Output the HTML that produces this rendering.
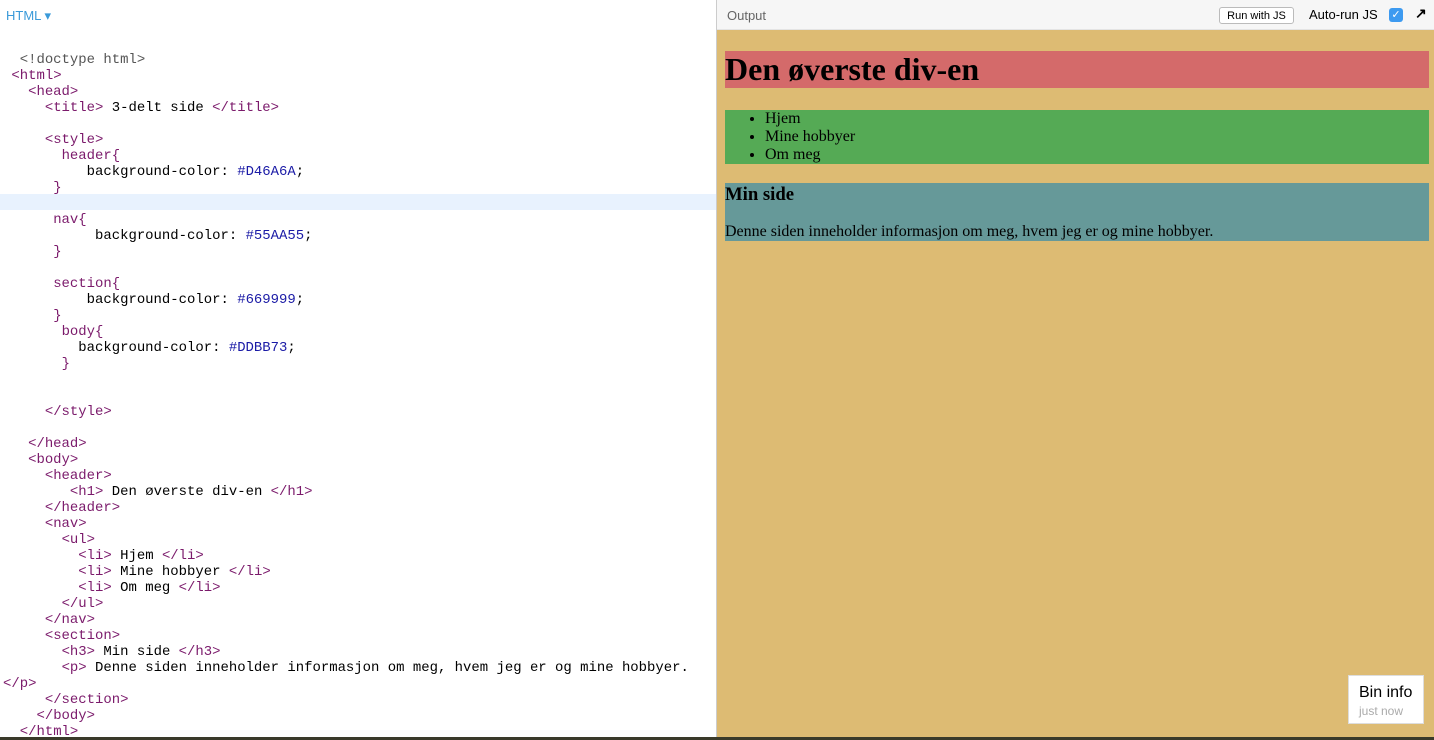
<!DOCTYPE html>
<html><head><meta charset="utf-8"><style>
html,body{margin:0;padding:0;width:1434px;height:740px;overflow:hidden;background:#fff;font-family:"Liberation Sans",sans-serif}
#left{position:absolute;left:0;top:0;width:716px;height:740px;background:#fff}
#lbl{position:absolute;left:6px;top:8px;color:#3a9ad9;font-size:13px}
.hl{position:absolute;left:0;top:194px;width:716px;height:16px;background:#e8f2fe}
.code{position:absolute;left:3px;top:52px;font-family:"Liberation Mono",monospace;font-size:13.95px;line-height:16px;white-space:pre;color:#000}
.t{color:#7b1a6b}.v{color:#1a1aa6}.g{color:#555}
#div{position:absolute;left:716px;top:0;width:1px;height:740px;background:#ccc}
#right{position:absolute;left:717px;top:0;width:717px;height:740px}
#rh{position:absolute;left:0;top:0;width:717px;height:30px;background:#f6f6f6;border-bottom:1px solid #e4e4e4;box-sizing:border-box}
#out{position:absolute;left:10px;top:8px;color:#666;font-size:13px}
#run{position:absolute;left:502px;top:7px;width:75px;height:17px;border:1px solid #bbb;border-radius:3px;background:#fff;font-size:11px;line-height:17px;text-align:center;box-sizing:border-box;color:#000}
#auto{position:absolute;left:592px;top:7px;font-size:13px;color:#000}
#cb{position:absolute;left:672px;top:8px;width:14px;height:14px;background:#3d9af0;border-radius:3px;color:#fff;font-size:11px;line-height:14px;text-align:center}
#arr{position:absolute;left:698px;top:5px;font-size:14px;font-weight:bold}
#y{position:absolute;left:0;top:30px;width:717px;height:707px;background:#DDBB73;font-family:"Liberation Serif",serif}
#bot{position:absolute;left:0;top:737px;width:1434px;height:3px;background:#3a3a2a}
.box{position:absolute;left:8px;width:704px}
h1{margin:0;font-size:32px;line-height:37px;font-weight:bold}
ul{margin:0;padding-left:40px;font-size:16px;line-height:18px}
#bin{position:absolute;left:631px;top:645px;width:76px;height:49px;background:#fff;border:1px solid #ddd;box-sizing:border-box;font-family:"Liberation Sans",sans-serif}
</style></head><body>
<div id="left">
<div id="lbl">HTML ▾</div>
<div class="hl"></div>
<div class="code"><span class="g">  &lt;!doctype html&gt;</span>
 <span class="t">&lt;html&gt;</span>
   <span class="t">&lt;head&gt;</span>
     <span class="t">&lt;title&gt;</span> 3-delt side <span class="t">&lt;/title&gt;</span>

     <span class="t">&lt;style&gt;</span>
       <span class="t">header{</span>
          background-color: <span class="v">#D46A6A</span>;
      <span class="t">}</span>

      <span class="t">nav{</span>
           background-color: <span class="v">#55AA55</span>;
      <span class="t">}</span>

      <span class="t">section{</span>
          background-color: <span class="v">#669999</span>;
      <span class="t">}</span>
       <span class="t">body{</span>
         background-color: <span class="v">#DDBB73</span>;
       <span class="t">}</span>


     <span class="t">&lt;/style&gt;</span>

   <span class="t">&lt;/head&gt;</span>
   <span class="t">&lt;body&gt;</span>
     <span class="t">&lt;header&gt;</span>
        <span class="t">&lt;h1&gt;</span> Den øverste div-en <span class="t">&lt;/h1&gt;</span>
     <span class="t">&lt;/header&gt;</span>
     <span class="t">&lt;nav&gt;</span>
       <span class="t">&lt;ul&gt;</span>
         <span class="t">&lt;li&gt;</span> Hjem <span class="t">&lt;/li&gt;</span>
         <span class="t">&lt;li&gt;</span> Mine hobbyer <span class="t">&lt;/li&gt;</span>
         <span class="t">&lt;li&gt;</span> Om meg <span class="t">&lt;/li&gt;</span>
       <span class="t">&lt;/ul&gt;</span>
     <span class="t">&lt;/nav&gt;</span>
     <span class="t">&lt;section&gt;</span>
       <span class="t">&lt;h3&gt;</span> Min side <span class="t">&lt;/h3&gt;</span>
       <span class="t">&lt;p&gt;</span> Denne siden inneholder informasjon om meg, hvem jeg er og mine hobbyer.
<span class="t">&lt;/p&gt;</span>
     <span class="t">&lt;/section&gt;</span>
    <span class="t">&lt;/body&gt;</span>
  <span class="t">&lt;/html&gt;</span></div>
</div>
<div id="div"></div>
<div id="right">
<div id="rh"><div id="out">Output</div><div id="run">Run with JS</div><div id="auto">Auto-run JS</div><div id="cb">✓</div><div id="arr">↗</div></div>
<div id="y">
<div class="box" style="top:21px;height:37px;background:#D46A6A"><h1>Den øverste div-en</h1></div>
<div class="box" style="top:80px;height:54px;background:#55AA55"><ul><li>Hjem</li><li>Mine hobbyer</li><li>Om meg</li></ul></div>
<div class="box" style="top:153px;height:58px;background:#669999;font-size:16px">
<div style="position:absolute;left:0;top:1px;font-size:18.7px;font-weight:bold;line-height:22px">Min side</div>
<div style="position:absolute;left:0;top:40px;line-height:18px">Denne siden inneholder informasjon om meg, hvem jeg er og mine hobbyer.</div>
</div>
<div id="bin"><div style="position:absolute;left:10px;top:8px;font-size:16px;color:#000">Bin info</div><div style="position:absolute;left:10px;top:28px;font-size:12px;color:#aaa">just now</div></div>
</div>
</div>
<div id="bot"></div>
</body></html>
